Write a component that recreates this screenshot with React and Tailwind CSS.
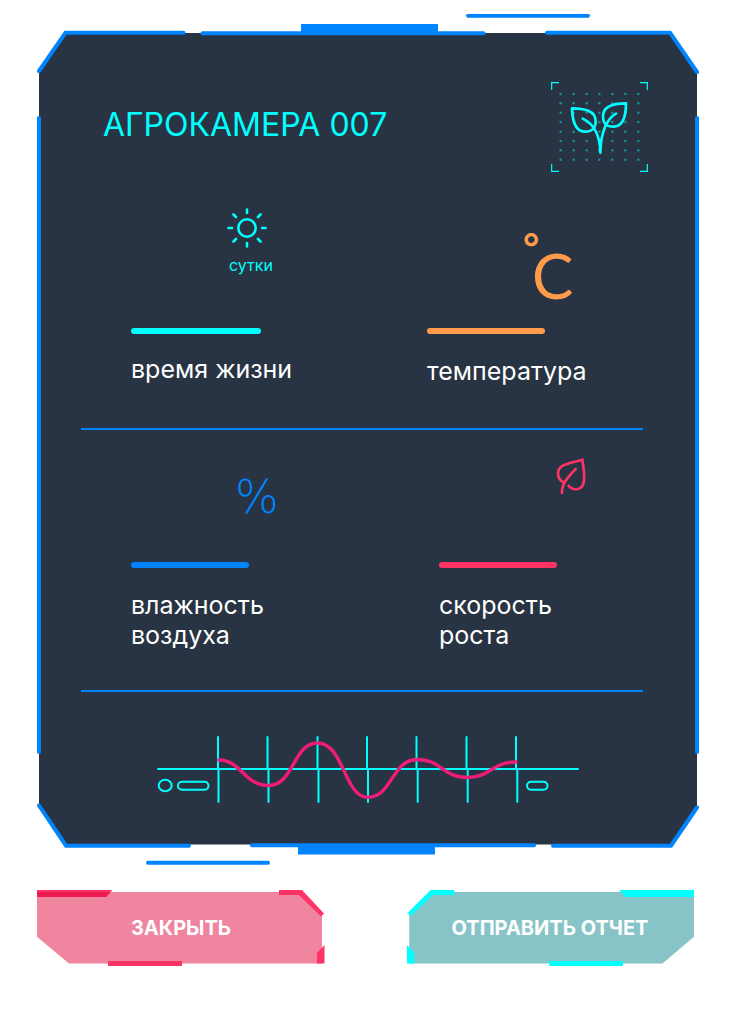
import React from "react";

function PanelFrame() {
  return (
    <svg
      aria-hidden="true"
      className="absolute inset-0 h-full w-full"
      viewBox="37 14 662 852"
      preserveAspectRatio="none"
    >
      <path d="M66 33H670.5L697 72V806L671 844.5H66L39 806V72Z" fill="#283443" />
      <g fill="none" stroke="#0084ff" strokeWidth="4" strokeLinecap="round">
        <path d="M39 71L65.500 32.700H183.500" />
        <path d="M202.500 33.300H483.500" />
        <path d="M547 32.700H670L697 72" />
        <path d="M468 15.800H588" />
        <path d="M39 118V752" />
        <path d="M697 118V752" />
        <path d="M39 805.500L66 845.700H189" />
        <path d="M252 845.300H534" />
        <path d="M553 845.700H671L697 807.500" />
        <path d="M148 862.700H268" />
      </g>
      <path d="M301 24H438V35H301ZM298 844H435V854.500H298Z" fill="#0084ff" />
    </svg>
  );
}

const DOT_COLS = [572, 611, 650, 688, 727, 766, 805];
const DOT_ROWS = [282, 310, 338, 366, 395, 423, 451, 479];

function SproutBadge() {
  return (
    <svg aria-hidden="true" className="h-[90px] w-[97px] shrink-0" viewBox="543 246 291 270" fill="none">
      <g fill="#00ffff" opacity="0.45">
        {DOT_ROWS.map((y) => DOT_COLS.map((x) => <circle key={x + "-" + y} cx={x} cy={y} r="3.800" />))}
      </g>
      <g stroke="#00ffff" strokeWidth="3.500">
        <path d="M545 270V248H567M810 248H832V270M832 492V514H810M567 514H545V492" />
      </g>
      <g stroke="#00ffff" strokeWidth="8" strokeLinecap="round" strokeLinejoin="round">
        <path d="M606 325C640 325 678 332 677 364C677 370 676 378 672 384C664 394 654 395 643 395C613 393 607 355 606 325Z" />
        <path d="M768 310C768 345 762 380 730 380C720 380 711 378 706 372C700 366 699 357 699 347C700 320 730 310 768 310Z" />
        <path d="M638 356C668 370 690 398 691 458C692 395 712 355 738 341" />
      </g>
    </svg>
  );
}

function SunIcon() {
  return (
    <svg
      aria-hidden="true"
      className="size-10"
      viewBox="0 0 40 40"
      fill="none"
      stroke="#00ffff"
      strokeWidth="2.600"
      strokeLinecap="round"
    >
      <circle cx="20" cy="20" r="8.700" />
      <path d="M20 1.500V5M20 35V38.500M1.500 20H5M35 20H38.500M6.500 6.500L9 9M31 31L33.500 33.500M33.500 6.500L31 9M9 31L6.500 33.500" />
    </svg>
  );
}

function LeafIcon() {
  return (
    <svg
      aria-hidden="true"
      className="h-[38px] w-[31px]"
      viewBox="408 50 93 114"
      fill="none"
      stroke="#ff3366"
      strokeWidth="8"
    >
      <path d="M434 128C418 121 414 110 414 98C416 70 450 70 487 58C490 80 497 110 490 130C484 150 458 153 444 134" />
      <path d="M467 86C445 110 424 130 426 158" strokeLinecap="round" />
    </svg>
  );
}

const TICKS_UP = [218, 267.5, 317.5, 367, 416.500, 466.500, 516];
const TICKS_DOWN = [218.500, 268.500, 318.500, 368, 417.700, 467.700, 517.300];

function WaveChart() {
  return (
    <svg
      role="img"
      aria-label="график"
      className="w-full max-w-[422px]"
      viewBox="157 733 422 73"
      fill="none"
      strokeLinecap="round"
    >
      <g stroke="#00ffff" strokeWidth="2">
        <path d="M158 769H578" />
        {TICKS_UP.map((x) => (
          <path key={x} d={"M" + x + " 737V769"} />
        ))}
        {TICKS_DOWN.map((x) => (
          <path key={x} d={"M" + x + " 769V802"} />
        ))}
        <ellipse cx="165.200" cy="785.500" rx="6.500" ry="5.800" />
        <rect x="178" y="781.800" width="30.500" height="8" rx="4" />
        <rect x="527" y="781.800" width="20.500" height="8" rx="4" />
      </g>
      <path
        d="M219 760C241 760 244 785.500 268.500 785.500C294 785.500 293 743 317.500 743C344 743 344 797.300 368 797.300C392 797.300 392 759.500 417 759.500C442 759.500 442 777.500 467.500 777.500C490 777.500 492 762 516 762"
        stroke="#f01c78"
        strokeWidth="3.400"
      />
    </svg>
  );
}

function Metric({ icon, iconClass, barClass, labelClass, children }) {
  return (
    <section className="min-w-0">
      <div className={iconClass}>{icon}</div>
      <div className={"h-1.5 max-w-full rounded-full " + barClass} />
      <h2 className={"text-[25px] leading-[30px] text-white " + labelClass}>{children}</h2>
    </section>
  );
}

function CloseShape() {
  return (
    <svg aria-hidden="true" className="absolute inset-0 h-full w-full" viewBox="0 0 288 76" preserveAspectRatio="none">
      <path d="M0 2H264L285 23V73.500H32L0 46.700Z" fill="#f0859f" />
      <path d="M0 0H75.500L69 7H0ZM242 0H265L287 23.500L284 26.500L262 5H242ZM280 63L287.500 55V73.500H280ZM71 71H145V76H71Z" fill="#ff3366" />
      <path d="M0 2H73.600L69 7H0Z" fill="#ee1c4e" />
    </svg>
  );
}

function SendShape() {
  return (
    <svg aria-hidden="true" className="absolute inset-0 h-full w-full" viewBox="0 0 288 76" preserveAspectRatio="none">
      <path d="M25 2H288V46.700L256.500 73.500H3.300V23Z" fill="#87c4c7" />
      <path d="M24.700 0H48.300V5H27L4.700 26L1.500 23ZM213 0H288V7H219.700ZM1 55L8.300 63V73.500H1ZM143.300 71H217V76H143.300Z" fill="#00ffff" />
    </svg>
  );
}

function ActionButton({ shape, children }) {
  return (
    <button
      type="button"
      className="relative h-[76px] max-w-72 flex-1 cursor-pointer text-[20px] leading-6 font-bold text-white"
    >
      {shape}
      <span className="relative">{children}</span>
    </button>
  );
}

export default function App() {
  return (
    <main className="min-h-screen bg-white px-[37px] pt-3.5 pb-14 font-['Inter','Noto_Sans',sans-serif]">
      <article className="relative">
        <PanelFrame />
        <div className="relative pt-[68px] pb-[60px]">
          <header className="flex items-start justify-between gap-4 pr-[51px] pl-[66px]">
            <h1 className="pt-6 text-[32px] leading-[38px] text-[#00ffff]">АГРОКАМЕРА 007</h1>
            <SproutBadge />
          </header>

          <div className="mr-14 ml-11 grid grid-cols-[37fr_27fr] border-b-2 border-[#0084ff] pb-[42px] pl-[50px]">
            <Metric
              icon={
                <div className="flex flex-col gap-1.5">
                  <SunIcon />
                  <span className="pl-0.5 text-[16px] leading-[22px] text-[#00ffff]">сутки</span>
                </div>
              }
              iconClass="flex h-[156px] items-start pt-9 pl-24"
              barClass="w-[130px] bg-[#00ffff]"
              labelClass="mt-5"
            >
              время жизни
            </Metric>
            <Metric
              icon={
                <div className="flex items-start text-[#ff9b4b]">
                  <span className="w-2.5 text-[40px] leading-[44px] font-medium">°</span>
                  <span className="pt-[18px] font-['Lato'] text-[62px] leading-[62px] font-normal">C</span>
                </div>
              }
              iconClass="flex h-[156px] items-start pt-[54px] pl-[95px]"
              barClass="w-[118px] bg-[#ff9b4b]"
              labelClass="mt-[22px]"
            >
              температура
            </Metric>
          </div>

          <div className="mr-14 ml-11 grid grid-cols-[77fr_51fr] border-b-2 border-[#0084ff] pb-10 pl-[50px]">
            <Metric
              icon={<span className="font-['DejaVu_Sans'] text-[46px] leading-[48px] font-extralight text-[#0084ff]">%</span>}
              iconClass="flex h-[132px] items-start pt-[43px] pl-[104px]"
              barClass="w-[118px] bg-[#0084ff]"
              labelClass="mt-[22px]"
            >
              влажность
              <br />
              воздуха
            </Metric>
            <Metric
              icon={<LeafIcon />}
              iconClass="flex h-[132px] items-start pt-[27px] pl-[117px]"
              barClass="w-[118px] bg-[#ff3366]"
              labelClass="mt-[22px]"
            >
              скорость
              <br />
              роста
            </Metric>
          </div>

          <div className="flex justify-center pt-[41px]">
            <WaveChart />
          </div>
        </div>
      </article>

      <footer className="mt-6 flex justify-between gap-4 pr-[5px]">
        <ActionButton shape={<CloseShape />}>ЗАКРЫТЬ</ActionButton>
        <ActionButton shape={<SendShape />}>ОТПРАВИТЬ ОТЧЕТ</ActionButton>
      </footer>
    </main>
  );
}
